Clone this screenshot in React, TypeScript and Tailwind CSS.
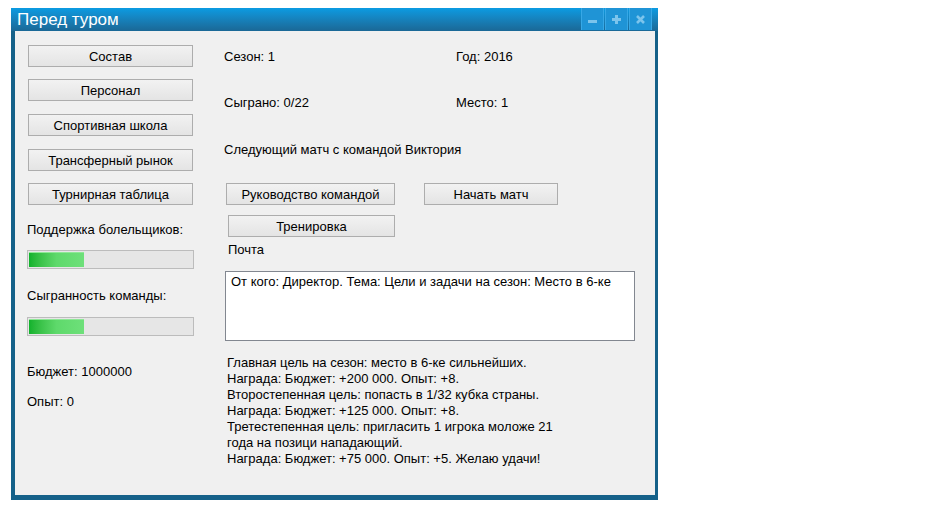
import React from "react";

const font = { fontFamily: '"Liberation Sans", Arial, sans-serif' };

function WinButton({ label, className }: { label: string; className: string }) {
  return (
    <button
      className={`h-[22px] border border-[#adadad] bg-gradient-to-b from-[#f2f2f2] to-[#e4e4e4] text-[13px] leading-none text-black ${className}`}
    >
      {label}
    </button>
  );
}

function Progress({ className }: { className: string }) {
  return (
    <div className={`h-[19px] w-[167px] border border-[#bcbcbc] bg-[#e6e6e6] p-px ${className}`}>
      <div className="h-full w-[55px] border-t border-[#8ee896] bg-gradient-to-r from-[#0fb22c] via-[#5ed96b] to-[#6ee07a]" />
    </div>
  );
}

function Line({ text, className = "" }: { text: string; className?: string }) {
  return <div className={`h-[16px] text-[13px] leading-[16px] text-black whitespace-nowrap ${className}`}>{text}</div>;
}

const mail = [
  "Главная цель на сезон: место в 6-ке сильнейших.",
  "Награда: Бюджет: +200 000. Опыт: +8.",
  "Второстепенная цель: попасть в 1/32 кубка страны.",
  "Награда: Бюджет: +125 000. Опыт: +8.",
  "Третестепенная цель: пригласить 1 игрока моложе 21",
  "года на позици нападающий.",
  "Награда: Бюджет: +75 000. Опыт: +5. Желаю удачи!",
];

export default function App() {
  return (
    <div className="w-[949px] h-[520px] bg-white pl-[11px] pt-[8px]" style={font}>
      <div className="w-[647px] h-[492px] flex flex-col">
        {/* Title bar */}
        <div className="h-[23px] flex items-stretch bg-gradient-to-b from-[#0a9be2] to-[#1a6896]">
          <div className="flex-1 pl-[6px] text-white text-[17px] leading-[23px]">Перед туром</div>
          <div className="flex pr-[6px] pb-px gap-px">
            <div className="w-[23px] flex items-center justify-center bg-[#1f94d6] border-x border-[#37a8e6]">
              <svg width="11" height="11" viewBox="0 0 11 11">
                <rect x="1" y="6" width="9" height="3" fill="#7cc4ec" />
              </svg>
            </div>
            <div className="w-[23px] flex items-center justify-center bg-[#1f94d6] border-x border-[#37a8e6]">
              <svg width="11" height="11" viewBox="0 0 11 11">
                <rect x="1" y="4" width="9" height="3" fill="#7cc4ec" />
                <rect x="4" y="1" width="3" height="9" fill="#7cc4ec" />
              </svg>
            </div>
            <div className="w-[23px] flex items-center justify-center bg-[#1f94d6] border-x border-[#37a8e6]">
              <svg width="11" height="11" viewBox="0 0 11 11">
                <path d="M2 2 L9 9 M9 2 L2 9" stroke="#7cc4ec" strokeWidth="2.6" />
              </svg>
            </div>
          </div>
        </div>

        {/* Client area */}
        <div className="flex-1 flex bg-[#f0f0f0] border-l-4 border-r-[3px] border-b-[5px] border-[#156189]">
          {/* Left column */}
          <div className="ml-[12px] w-[167px] flex flex-col">
            <WinButton label="Состав" className="mt-[14px] ml-px w-[165px]" />
            <WinButton label="Персонал" className="mt-[12px] ml-px w-[165px]" />
            <WinButton label="Спортивная школа" className="mt-[13px] ml-px w-[165px]" />
            <WinButton label="Трансферный рынок" className="mt-[13px] ml-px w-[165px]" />
            <WinButton label="Турнирная таблица" className="mt-[12px] ml-px w-[165px]" />
            <Line text="Поддержка болельщиков:" className="mt-[17px]" />
            <Progress className="mt-[12px]" />
            <Line text="Сыгранность команды:" className="mt-[19px]" />
            <Progress className="mt-[13px]" />
            <Line text="Бюджет: 1000000" className="mt-[28px]" />
            <Line text="Опыт: 0" className="mt-[14px]" />
          </div>

          {/* Right column */}
          <div className="ml-[30px] flex flex-col">
            <div className="mt-[18px] flex">
              <Line text="Сезон: 1" className="w-[232px]" />
              <Line text="Год: 2016" />
            </div>
            <div className="mt-[30px] flex">
              <Line text="Сыграно: 0/22" className="w-[232px]" />
              <Line text="Место: 1" />
            </div>
            <Line text="Следующий матч с командой Виктория" className="mt-[31px]" />
            <div className="mt-[25px] flex">
              <WinButton label="Руководство командой" className="ml-[2px] w-[169px]" />
              <WinButton label="Начать матч" className="ml-[29px] w-[134px]" />
            </div>
            <WinButton label="Тренировка" className="mt-[10px] ml-[4px] w-[167px]" />
            <Line text="Почта" className="mt-[5px] ml-[4px]" />
            <div className="mt-[13px] ml-px w-[410px] h-[70px] border border-[#828790] bg-white pl-[5px] pt-[2px]">
              <Line text="От кого: Директор. Тема: Цели и задачи на сезон: Место в 6-ке" />
            </div>
            <div className="mt-[14px] ml-[3px] flex flex-col">
              {mail.map((t, i) => (
                <Line key={i} text={t} />
              ))}
            </div>
          </div>
        </div>
      </div>
    </div>
  );
}
